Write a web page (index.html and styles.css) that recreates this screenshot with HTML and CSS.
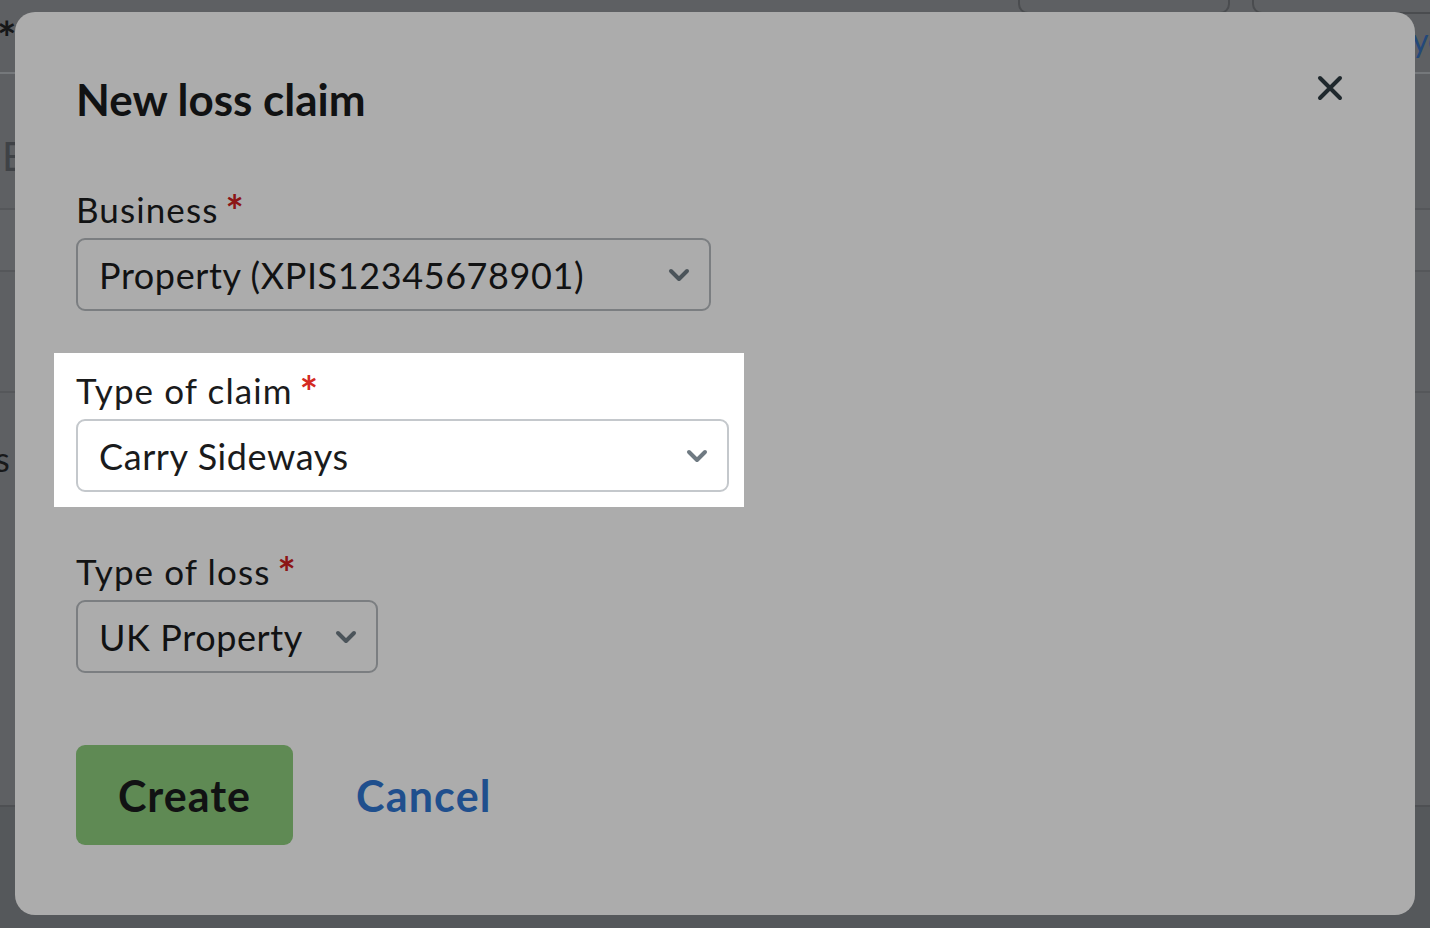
FILE: index.html
```html
<!DOCTYPE html>
<html lang="en">
<head>
<meta charset="utf-8">
<title>New loss claim</title>
<link rel="stylesheet" href="styles.css">
</head>
<body>
<div class="page">
  <div class="page-head">
    <span class="page-star">*</span>
    <div class="page-actions">
      <span class="ghost-btn"></span>
      <span class="ghost-btn"></span>
    </div>
  </div>
  <div class="page-tabs"><span class="tab-link">yo</span></div>
  <div class="page-title">E</div>
  <div class="page-table">
    <div class="t-head"></div>
    <div class="t-row"></div>
    <div class="t-row t-row-text"><span class="t-cell">s</span></div>
  </div>
  <div class="page-foot"></div>
</div>

<div class="modal" role="dialog" aria-labelledby="modal-title">
  <div class="modal-head">
    <h1 id="modal-title" class="modal-title">New loss claim</h1>
    <button class="close-btn" aria-label="Close">
      <svg viewBox="0 0 26 26" width="26" height="26"><path d="M3 3 L23 23 M23 3 L3 23" fill="none" stroke="#1f282d" stroke-width="4" stroke-linecap="round"/></svg>
    </button>
  </div>

  <div class="field">
    <div class="label">Business<span class="req">*</span></div>
    <div class="select select-business">
      <span class="select-value">Property (XPIS12345678901)</span>
      <svg class="chev" viewBox="0 0 22 14" width="22" height="14"><path d="M3 3 L11 11 L19 3" fill="none" stroke-width="4" stroke-linecap="round" stroke-linejoin="round"/></svg>
    </div>
  </div>

  <div class="field spotlight">
    <div class="label">Type of claim<span class="req">*</span></div>
    <div class="select select-claim">
      <span class="select-value">Carry Sideways</span>
      <svg class="chev" viewBox="0 0 22 14" width="22" height="14"><path d="M3 3 L11 11 L19 3" fill="none" stroke-width="4" stroke-linecap="round" stroke-linejoin="round"/></svg>
    </div>
  </div>

  <div class="field">
    <div class="label">Type of loss<span class="req">*</span></div>
    <div class="select select-loss">
      <span class="select-value">UK Property</span>
      <svg class="chev" viewBox="0 0 22 14" width="22" height="14"><path d="M3 3 L11 11 L19 3" fill="none" stroke-width="4" stroke-linecap="round" stroke-linejoin="round"/></svg>
    </div>
  </div>

  <div class="actions">
    <button class="btn-create">Create</button>
    <a class="btn-cancel" href="#">Cancel</a>
  </div>
</div>
</body>
</html>
```
FILE: styles.css
```css
html, body {
  margin: 0;
  padding: 0;
}
body {
  width: 1430px;
  height: 928px;
  overflow: hidden;
  position: relative;
  font-family: Lato, "Noto Sans", "Liberation Sans", sans-serif;
  background: #5e6063;
}

/* dimmed page behind the dialog */
.page {
  height: 928px;
  display: flex;
  flex-direction: column;
  background: #5e6063;
}
.page-head {
  height: 28px;
  display: flex;
  justify-content: space-between;
  align-items: flex-start;
}
.page-star {
  font-size: 46px;
  line-height: 46px;
  color: #161718;
  margin: 15px 0 0 -3px;
  font-weight: 700;
}
.page-actions {
  display: flex;
  gap: 22px;
  margin-right: -34px;
  margin-top: -30px;
}
.ghost-btn {
  width: 208px;
  height: 40px;
  border: 2px solid #4a4c4f;
  border-radius: 10px;
}
.page-tabs {
  height: 44px;
  border-bottom: 2px solid #75787b;
  display: flex;
  align-items: flex-start;
  padding-left: 1412px;
}
.tab-link {
  color: #23487a;
  font-size: 32px;
  line-height: 34px;
  white-space: nowrap;
  margin-top: -5px;
}
.page-title {
  height: 134px;
  color: #3f4246;
  font-size: 40px;
  line-height: 40px;
  padding: 62px 0 0 2px;
  box-sizing: border-box;
}
.page-table {
  display: flex;
  flex-direction: column;
}
.t-head {
  border-top: 2px solid #55575a;
  border-bottom: 2px solid #55575a;
  background: #616366;
  box-sizing: border-box;
  height: 64px;
}
.t-row {
  height: 121px;
  border-bottom: 2px solid #55575a;
  box-sizing: border-box;
  display: flex;
  align-items: center;
}
.t-row-text {
  height: 414px;
  border-bottom-color: #4e5053;
  align-items: flex-start;
}
.t-cell {
  color: #18191a;
  font-size: 34px;
  line-height: 40px;
  margin: 46px 0 0 -5px;
}
.page-foot {
  flex: 1;
  background: #55585b;
}

/* dialog */
.modal {
  position: absolute;
  left: 15px;
  top: 12px;
  width: 1400px;
  height: 903px;
  box-sizing: border-box;
  padding: 61px 61px 0 61px;
  background: #acacac;
  border-radius: 20px;
  display: flex;
  flex-direction: column;
  align-items: flex-start;
}
.modal-head {
  align-self: stretch;
  display: flex;
  justify-content: space-between;
  align-items: flex-start;
  margin-bottom: 62px;
}
.modal-title {
  margin: 0;
  font-size: 44px;
  line-height: 53px;
  font-weight: 700;
  color: #111213;
}
.close-btn {
  border: 0;
  padding: 0;
  background: none;
  width: 26px;
  height: 26px;
  margin: 2px 11px 0 0;
  display: flex;
}

.field {
  display: flex;
  flex-direction: column;
  align-items: flex-start;
  margin-bottom: 58px;
}
.label {
  font-size: 35px;
  line-height: 42px;
  letter-spacing: 1.1px;
  color: #121314;
  margin: 0 0 8px 0;
  white-space: nowrap;
}
.req {
  color: #8c1515;
  font-weight: 700;
  font-size: 43px;
  line-height: 0;
  vertical-align: -4px;
  margin-left: 7px;
}
.select {
  box-sizing: border-box;
  height: 73px;
  border: 2px solid #7b7e81;
  border-radius: 9px;
  display: flex;
  align-items: center;
  justify-content: space-between;
  padding: 0 19px 0 21px;
}
.select-value {
  font-size: 36px;
  letter-spacing: 0.6px;
  color: #111213;
  white-space: nowrap;
}
.chev {
  stroke: #4b545a;
  flex: none;
}
.select-business { width: 635px; }
.select-claim { width: 653px; }
.select-loss { width: 302px; }

.spotlight {
  background: #ffffff;
  margin: -16px -15px 43px -22px;
  padding: 16px 15px 15px 22px;
}
.spotlight .label { color: #1a1b1c; }
.spotlight .req { color: #d42a22; }
.spotlight .select { border-color: #c4c8cc; }
.spotlight .select-value { color: #1a1b1c; }
.spotlight .chev { stroke: #6f7a82; }

.actions {
  margin-top: 14px;
  display: flex;
  align-items: center;
  gap: 63px;
}
.btn-create {
  height: 100px;
  width: 217px;
  border: 0;
  border-radius: 9px;
  background: #5f8a54;
  color: #111213;
  font-family: Lato, "Noto Sans", sans-serif;
  font-size: 43px;
  font-weight: 700;
  letter-spacing: 1px;
}
.btn-cancel {
  color: #1f4f8d;
  font-size: 43px;
  font-weight: 700;
  letter-spacing: 1.2px;
  text-decoration: none;
}
```
